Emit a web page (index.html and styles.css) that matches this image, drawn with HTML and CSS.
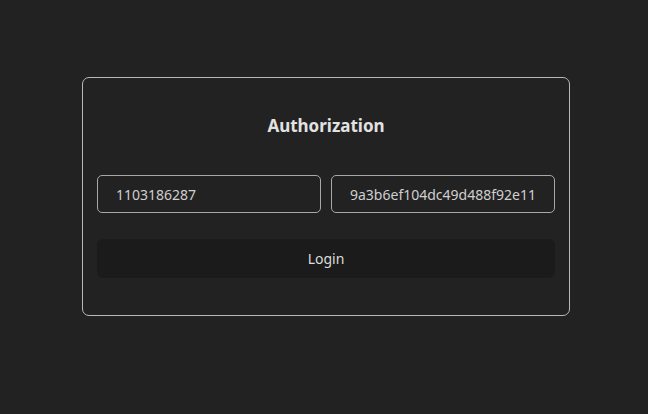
FILE: index.html
```html
<!DOCTYPE html>
<html>
<head>
<meta charset="utf-8">
<link rel="stylesheet" href="styles.css">
</head>
<body>
<div class="page">
  <form class="card">
    <h1 class="title">Authorization</h1>
    <div class="fields">
      <input class="field" type="text" value="1103186287">
      <input class="field" type="text" value="9a3b6ef104dc49d488f92e11">
    </div>
    <button class="login" type="button">Login</button>
  </form>
</div>
</body>
</html>
```
FILE: styles.css
```css
html, body {
  margin: 0;
  padding: 0;
  background: #222222;
  height: 100%;
}
.page {
  display: flex;
  justify-content: center;
  padding: 77px 0 0 4px;
  font-family: "Noto Sans", "Open Sans", sans-serif;
  color: #dedede;
}
.card {
  box-sizing: border-box;
  width: 488px;
  height: 239px;
  border: 1px solid #b8b8b8;
  border-radius: 7px;
  padding: 0 14px;
  display: flex;
  flex-direction: column;
  margin: 0;
}
.title {
  margin: 36px 0 0;
  font-size: 17px;
  line-height: 24px;
  font-weight: 700;
  text-align: center;
  color: #e2e2e2;
}
.fields {
  margin-top: 37px;
  display: grid;
  grid-template-columns: 1fr 1fr;
  gap: 10px;
}
.field {
  box-sizing: border-box;
  height: 38px;
  width: 100%;
  background: #222222;
  border: 1px solid #a8a8a8;
  border-radius: 5px;
  padding: 0 17px 0 18px;
  font-family: inherit;
  font-size: 14px;
  color: #cfcfcf;
  outline: none;
}
.login {
  margin-top: 26px;
  height: 39px;
  border: none;
  border-radius: 6px;
  background: #1b1b1b;
  color: #dcdcdc;
  font-family: inherit;
  font-size: 14px;
}
```
